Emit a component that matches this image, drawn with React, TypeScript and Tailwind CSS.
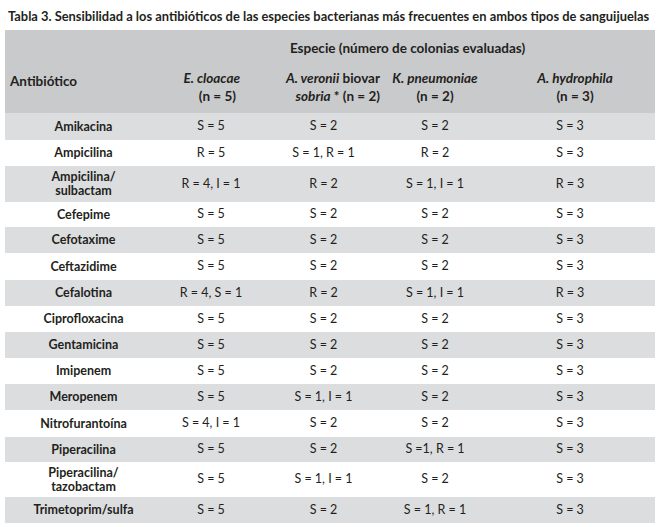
import React from "react";

type Row = { name: string[]; v: string[]; h: number };

const rows: Row[] = [
  { name: ["Amikacina"], v: ["S = 5", "S = 2", "S = 2", "S = 3"], h: 27 },
  { name: ["Ampicilina"], v: ["R = 5", "S = 1, R = 1", "R = 2", "S = 3"], h: 26 },
  { name: ["Ampicilina/", "sulbactam"], v: ["R = 4, I = 1", "R = 2", "S = 1, I = 1", "R = 3"], h: 36 },
  { name: ["Cefepime"], v: ["S = 5", "S = 2", "S = 2", "S = 3"], h: 25 },
  { name: ["Cefotaxime"], v: ["S = 5", "S = 2", "S = 2", "S = 3"], h: 26 },
  { name: ["Ceftazidime"], v: ["S = 5", "S = 2", "S = 2", "S = 3"], h: 27 },
  { name: ["Cefalotina"], v: ["R = 4, S = 1", "R = 2", "S = 1, I = 1", "R = 3"], h: 26 },
  { name: ["Ciprofloxacina"], v: ["S = 5", "S = 2", "S = 2", "S = 3"], h: 26 },
  { name: ["Gentamicina"], v: ["S = 5", "S = 2", "S = 2", "S = 3"], h: 26 },
  { name: ["Imipenem"], v: ["S = 5", "S = 2", "S = 2", "S = 3"], h: 26 },
  { name: ["Meropenem"], v: ["S = 5", "S = 1, I = 1", "S = 2", "S = 3"], h: 26 },
  { name: ["Nitrofurantoína"], v: ["S = 4, I = 1", "S = 2", "S = 2", "S = 3"], h: 27 },
  { name: ["Piperacilina"], v: ["S = 5", "S = 2", "S =1, R = 1", "S = 3"], h: 25 },
  { name: ["Piperacilina/", "tazobactam"], v: ["S = 5", "S = 1, I = 1", "S = 2", "S = 3"], h: 35 },
  { name: ["Trimetoprim/sulfa"], v: ["S = 5", "S = 2", "S = 1, R = 1", "S = 3"], h: 26 },
];

const colW = ["w-[155px]", "w-[102px]", "w-[123px]", "w-[110px]", "w-[160px]"];

export default function App() {
  return (
    <div
      className="w-[659px] h-[527px] bg-white text-[#231f20] overflow-hidden"
      style={{ fontFamily: "Lato, 'Open Sans', sans-serif" }}
    >
      <div className="h-[30px] pl-[8px] pt-[3px] whitespace-nowrap">
        <span className="inline-block origin-left scale-x-[0.92] font-bold text-[14px] leading-[17px]">
          Tabla 3. Sensibilidad a los antibióticos de las especies bacterianas más frecuentes en ambos tipos de sanguijuelas
        </span>
      </div>
      <div className="ml-[5px] w-[650px]">
        <div className="h-[83px] bg-[#c9cacc] flex font-bold text-[13.5px] leading-[18px]">
          <div className={`${colW[0]} flex items-center pl-[5px] pt-[18px]`}>Antibiótico</div>
          <div className="flex-1 flex flex-col">
            <div className="h-[38px] flex items-start justify-center pt-[9px]">
              Especie (número de colonias evaluadas)
            </div>
            <div className="flex flex-1 pt-[1px]">
              <div className={`${colW[1]} flex flex-col items-end pr-[22px]`}>
                <span><i>E. cloacae</i></span>
                <span className="pr-[4px]">(n = 5)</span>
              </div>
              <div className={`${colW[2]} flex flex-col items-end pr-[5px]`}>
                <span>
                  <i>A. veronii</i> biovar
                </span>
                <span>
                  <i>sobria</i> * (n = 2)
                </span>
              </div>
              <div className={`${colW[3]} flex flex-col items-center pr-[10px]`}>
                <span><i>K. pneumoniae</i></span>
                <span>(n = 2)</span>
              </div>
              <div className={`${colW[4]} flex flex-col items-center`}>
                <span><i>A. hydrophila</i></span>
                <span>(n = 3)</span>
              </div>
            </div>
          </div>
        </div>
        {rows.map((r, i) => (
          <div
            key={i}
            className={`flex items-center text-[12.5px] ${i % 2 === 0 ? "bg-[#dcdddf]" : "bg-white"}`}
            style={{ height: r.h }}
          >
            <div className={`${colW[0]} flex flex-col items-center font-bold leading-[14px] pl-[2px]`}>
              {r.name.map((n, j) => (
                <span key={j}>{n}</span>
              ))}
            </div>
            {r.v.map((v, j) => (
              <div
                key={j}
                className={`${colW[j + 1]} text-center ${j === 2 ? "pr-[10px]" : ""} ${j === 3 ? "pr-[10px]" : ""}`}
              >
                {v}
              </div>
            ))}
          </div>
        ))}
      </div>
    </div>
  );
}
